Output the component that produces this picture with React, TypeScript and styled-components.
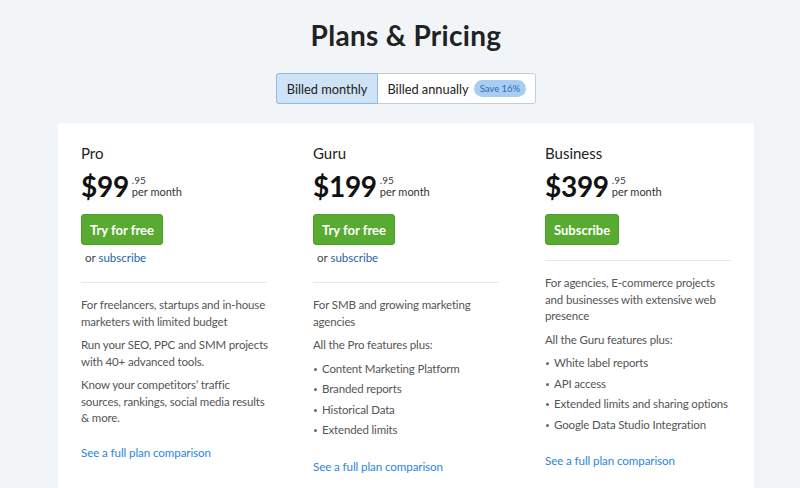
import React from "react";
import styled, { createGlobalStyle } from "styled-components";

const Global = createGlobalStyle`
  html, body { margin: 0; padding: 0; background: #f2f5f8; overflow: hidden; }
  body { font-family: Lato, "Noto Sans", sans-serif; -webkit-font-smoothing: antialiased; }
  * { box-sizing: border-box; }
`;

const Page = styled.div`
  width: 800px;
  height: 488px;
  background: #f2f5f8;
  display: flex;
  flex-direction: column;
  align-items: center;
  padding-top: 16px;
  overflow: hidden;
  & > * { flex-shrink: 0; }
`;

const Title = styled.h1`
  margin: 0 0 0 12px;
  font-size: 28px;
  line-height: 38px;
  font-weight: 700;
  color: #222;
  letter-spacing: 0.3px;
`;

const Toggle = styled.div`
  margin: 19px 0 0 12px;
  display: flex;
  height: 31px;
  border: 1px solid #c6ccd3;
  border-radius: 3px;
  background: #fff;
`;

const ToggleOption = styled.div<{ $active?: boolean }>`
  display: flex;
  align-items: center;
  gap: 5px;
  padding: 0 ${(p) => (p.$active ? "10px" : "9px")};
  font-size: 12.8px;
  color: #222;
  background: ${(p) => (p.$active ? "#cfe2f6" : "#fff")};
  border: ${(p) => (p.$active ? "1px solid #8fbbe6" : "none")};
  margin: ${(p) => (p.$active ? "-1px 0 -1px -1px" : "0")};
  border-radius: ${(p) => (p.$active ? "3px 0 0 3px" : "0 3px 3px 0")};
  cursor: pointer;
`;

const Badge = styled.span`
  background: #a9cdf0;
  color: #2c6cb3;
  font-size: 9.5px;
  line-height: 17px;
  height: 17px;
  padding: 0 6px;
  border-radius: 9px;
`;

const Card = styled.div`
  margin-top: 19px;
  width: 696px;
  margin-left: 12px;
  height: 400px;
  background: #fff;
  border-radius: 3px 3px 0 0;
  padding: 20px 23px 0;
  display: grid;
  grid-template-columns: repeat(3, 232px);
  align-items: start;
`;

const Plan = styled.div`
  width: 200px;
  display: flex;
  flex-direction: column;
`;

const PlanName = styled.div`
  font-size: 15px;
  line-height: 20px;
  color: #222;
`;

const PriceRow = styled.div`
  display: flex;
  align-items: flex-start;
  margin-top: 6px;
  height: 34px;
`;

const Amount = styled.span`
  font-size: 28px;
  line-height: 34px;
  font-weight: 700;
  color: #111;
  letter-spacing: -0.3px;
`;

const PriceSide = styled.div`
  display: flex;
  flex-direction: column;
  margin-left: 3px;
  padding-top: 6px;
`;

const Cents = styled.span`
  font-size: 10px;
  line-height: 10px;
  color: #333;
`;

const Per = styled.span`
  font-size: 11px;
  line-height: 13px;
  color: #333;
`;

const Button = styled.button`
  margin-top: 11px;
  align-self: flex-start;
  height: 31px;
  padding: 0 8px;
  background: #58ab30;
  border: 1px solid #4c9d27;
  border-radius: 3px;
  color: #fff;
  font-family: inherit;
  font-size: 13px;
  font-weight: 700;
  cursor: pointer;
`;

const OrLine = styled.div`
  margin: 6px 0 0 4px;
  font-size: 11.5px;
  line-height: 14px;
  color: #444;
`;

const SubLink = styled.a`
  color: #1f62ab;
  text-decoration: none;
`;

const Divider = styled.hr<{ $gap: number }>`
  margin: ${(p) => p.$gap}px 0 14px;
  border: none;
  border-top: 1px solid #e6e8ea;
  width: 186px;
`;

const Para = styled.p`
  margin: 0;
  font-size: 11.5px;
  letter-spacing: -0.15px;
  line-height: 16.5px;
  color: #555;
  white-space: nowrap;
  & + & { margin-top: 7px; }
`;

const List = styled.ul`
  margin: 5px 0 0;
  padding: 0;
  list-style: none;
`;

const Item = styled.li`
  position: relative;
  padding-left: 9px;
  font-size: 11.5px;
  letter-spacing: -0.15px;
  line-height: 20.5px;
  color: #555;
  &::before {
    content: "";
    position: absolute;
    left: 1px;
    top: 9px;
    width: 3px;
    height: 3px;
    border-radius: 50%;
    background: #666;
  }
`;

const FullLink = styled.a`
  align-self: flex-start;
  margin-top: 18px;
  font-size: 11.6px;
  letter-spacing: -0.1px;
  line-height: 16px;
  color: #2c86d9;
  text-decoration: none;
`;

type PlanData = {
  name: string;
  amount: string;
  cta: string;
  trial: boolean;
  paras: string[][];
  items?: string[];
};

const plans: PlanData[] = [
  {
    name: "Pro",
    amount: "$99",
    cta: "Try for free",
    trial: true,
    paras: [
      ["For freelancers, startups and in-house", "marketers with limited budget"],
      ["Run your SEO, PPC and SMM projects", "with 40+ advanced tools."],
      ["Know your competitors’ traffic", "sources, rankings, social media results", "& more."],
    ],
  },
  {
    name: "Guru",
    amount: "$199",
    cta: "Try for free",
    trial: true,
    paras: [["For SMB and growing marketing", "agencies"], ["All the Pro features plus:"]],
    items: ["Content Marketing Platform", "Branded reports", "Historical Data", "Extended limits"],
  },
  {
    name: "Business",
    amount: "$399",
    cta: "Subscribe",
    trial: false,
    paras: [
      ["For agencies, E-commerce projects", "and businesses with extensive web", "presence"],
      ["All the Guru features plus:"],
    ],
    items: [
      "White label reports",
      "API access",
      "Extended limits and sharing options",
      "Google Data Studio Integration",
    ],
  },
];

function PlanColumn({ plan }: { plan: PlanData }) {
  return (
    <Plan>
      <PlanName>{plan.name}</PlanName>
      <PriceRow>
        <Amount>{plan.amount}</Amount>
        <PriceSide>
          <Cents>.95</Cents>
          <Per>per month</Per>
        </PriceSide>
      </PriceRow>
      <Button>{plan.cta}</Button>
      {plan.trial && (
        <OrLine>
          or <SubLink href="#">subscribe</SubLink>
        </OrLine>
      )}
      <Divider $gap={plan.trial ? 17 : 15} />
      {plan.paras.map((lines) => (
        <Para key={lines[0]}>
          {lines.map((l, i) => (
            <React.Fragment key={l}>
              {i > 0 && <br />}
              {l}
            </React.Fragment>
          ))}
        </Para>
      ))}
      {plan.items && (
        <List>
          {plan.items.map((i) => (
            <Item key={i}>{i}</Item>
          ))}
        </List>
      )}
      <FullLink href="#">See a full plan comparison</FullLink>
    </Plan>
  );
}

export default function App() {
  return (
    <>
      <Global />
      <Page>
        <Title>Plans &amp; Pricing</Title>
        <Toggle>
          <ToggleOption $active>Billed monthly</ToggleOption>
          <ToggleOption>
            Billed annually <Badge>Save 16%</Badge>
          </ToggleOption>
        </Toggle>
        <Card>
          {plans.map((p) => (
            <PlanColumn key={p.name} plan={p} />
          ))}
        </Card>
      </Page>
    </>
  );
}
